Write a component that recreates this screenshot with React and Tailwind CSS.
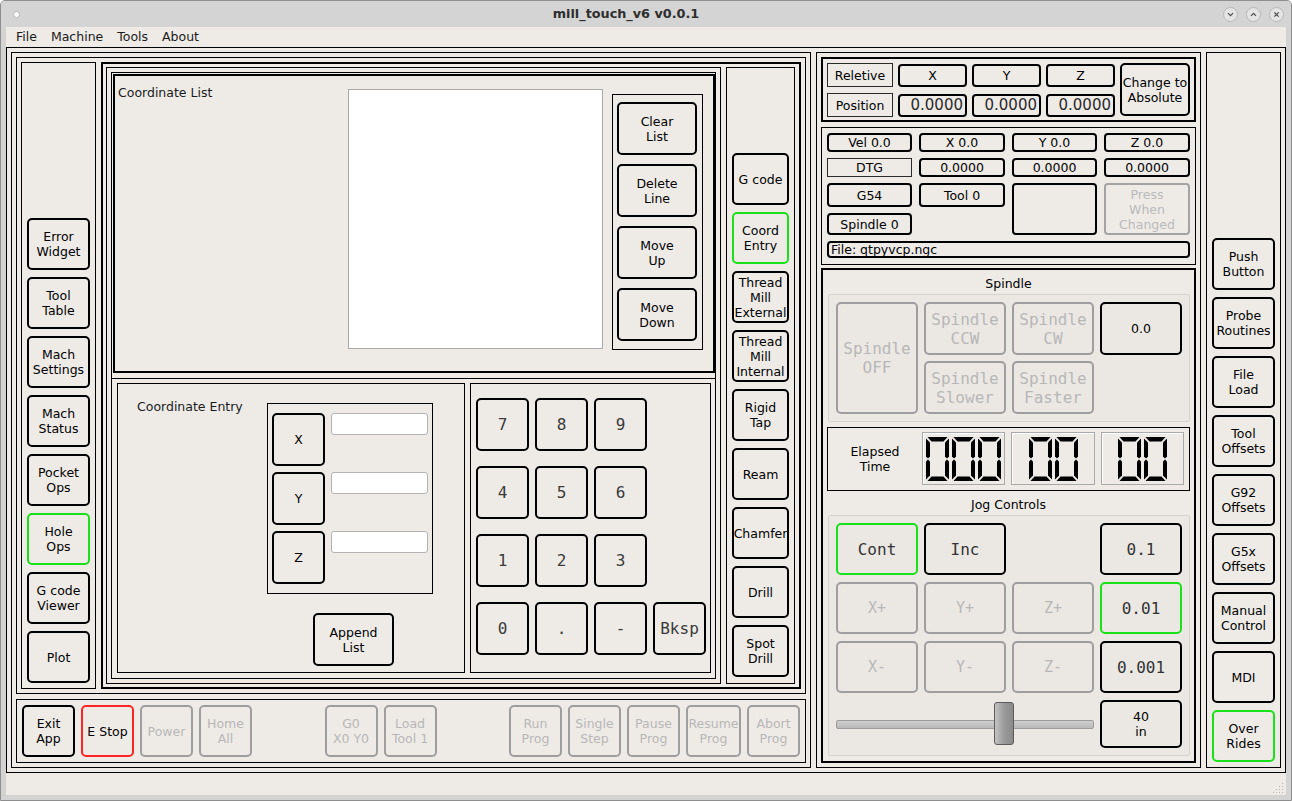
import React from "react";

const base =
  "flex items-center justify-center text-center whitespace-nowrap leading-[15px] border-2 rounded-[5px] shrink-0";

function Btn({ v = "n", className = "", children }) {
  const col =
    v === "g"
      ? "border-[#19e019]"
      : v === "r"
      ? "border-[#ff2424]"
      : v === "d"
      ? "border-[#9e9e9e] text-[#b7b7b7]"
      : "border-black";
  return <div className={`${base} ${col} ${className}`}>{children}</div>;
}

function L2({ a, b }) {
  return (
    <span>
      {a}
      <br />
      {b}
    </span>
  );
}

function Digit() {
  return (
    <svg width="23" height="44" viewBox="0 0 23 44">
      <g fill="#000">
        <polygon points="1.5,0 21.5,0 17.5,4.5 5.5,4.5" />
        <polygon points="1.5,44 21.5,44 17.5,39.5 5.5,39.5" />
        <polygon points="0,1.5 4,5.5 4,19.5 2,21.5 0,19.5" />
        <polygon points="0,24.5 2,22.5 4,24.5 4,38.5 0,42.5" />
        <polygon points="23,1.5 19,5.5 19,19.5 21,21.5 23,19.5" />
        <polygon points="23,24.5 21,22.5 19,24.5 19,38.5 23,42.5" />
      </g>
    </svg>
  );
}

function LCD({ n, w }) {
  return (
    <div
      className={`${w} h-[53px] flex items-center justify-center gap-[3px] border border-[#a9a9a9] shadow-[inset_1px_1px_0_#ffffff]`}
    >
      {Array.from({ length: n }).map((_, i) => (
        <Digit key={i} />
      ))}
    </div>
  );
}

function TitleBar() {
  return (
    <div className="h-[26px] flex items-center bg-[#d4d4d4] shrink-0">
      <div className="w-[35px] flex items-center pl-[12px]">
        <div className="w-[7px] h-[7px] rounded-full bg-white border border-[#b4b4b4]" />
      </div>
      <div className="flex-1 text-center font-bold text-[12.8px] text-[#2e2e2e]">
        mill_touch_v6 v0.0.1
      </div>
      <div className="w-[75px] flex justify-end gap-[8px] pr-[7px]">
        <div className="w-[15px] h-[15px] rounded-full bg-[#e4e4e4] border border-[#b8b8b8] flex items-center justify-center">
          <svg width="9" height="9" viewBox="0 0 9 9">
            <path d="M2 3.2 L4.5 5.7 L7 3.2" stroke="#4a4a4a" strokeWidth="1.2" fill="none" />
          </svg>
        </div>
        <div className="w-[15px] h-[15px] rounded-full bg-[#e4e4e4] border border-[#b8b8b8] flex items-center justify-center">
          <svg width="9" height="9" viewBox="0 0 9 9">
            <path d="M2 5.8 L4.5 3.3 L7 5.8" stroke="#4a4a4a" strokeWidth="1.2" fill="none" />
          </svg>
        </div>
        <div className="w-[15px] h-[15px] rounded-full bg-[#e4e4e4] border border-[#b8b8b8] flex items-center justify-center">
          <svg width="9" height="9" viewBox="0 0 9 9">
            <path d="M2.3 2.3 L6.7 6.7 M6.7 2.3 L2.3 6.7" stroke="#4a4a4a" strokeWidth="1.2" fill="none" />
          </svg>
        </div>
      </div>
    </div>
  );
}

function MenuBar() {
  return (
    <div className="h-[20px] flex items-center pl-[3px] shrink-0 text-[#1a1a1a]">
      {["File", "Machine", "Tools", "About"].map((m) => (
        <div key={m} className="px-[7px]">
          {m}
        </div>
      ))}
    </div>
  );
}

function LeftSidebar() {
  const items = [
    ["Error", "Widget"],
    ["Tool", "Table"],
    ["Mach", "Settings"],
    ["Mach", "Status"],
    ["Pocket", "Ops"],
    ["Hole", "Ops", "g"],
    ["G code", "Viewer"],
    ["Plot"],
  ];
  return (
    <div className="w-[75px] border border-black p-[5px] flex flex-col justify-end gap-[7px] shrink-0">
      {items.map((it, i) => (
        <Btn key={i} v={it[2] || "n"} className="w-full h-[52px]">
          {it.length > 1 ? <L2 a={it[0]} b={it[1]} /> : it[0]}
        </Btn>
      ))}
    </div>
  );
}

function TabSidebar() {
  const items = [
    [["G code"]],
    [["Coord", "Entry"], "g"],
    [["Thread", "Mill", "External"]],
    [["Thread", "Mill", "Internal"]],
    [["Rigid", "Tap"]],
    [["Ream"]],
    [["Chamfer"]],
    [["Drill"]],
    [["Spot", "Drill"]],
  ];
  return (
    <div className="w-[69px] border border-black px-[5px] pt-[5px] pb-[6px] flex flex-col justify-end gap-[7px] shrink-0">
      {items.map((it, i) => (
        <Btn key={i} v={it[1] || "n"} className="w-full h-[52px]">
          <span>
            {it[0].map((t, j) => (
              <React.Fragment key={j}>
                {j > 0 && <br />}
                {t}
              </React.Fragment>
            ))}
          </span>
        </Btn>
      ))}
    </div>
  );
}

function CoordList() {
  return (
    <div className="ml-[1px] mt-[1px] h-[299px] border-2 border-black flex items-start shrink-0">
      <div className="w-[233px] pl-[3px] pt-[9px] leading-[15px] text-[#1a1a1a]">Coordinate List</div>
      <div className="mt-[13px] w-[255px] h-[260px] bg-white border border-[#a8a8a8]" />
      <div className="ml-[9px] mt-[18px] w-[91px] h-[256px] border border-black pl-[4px] pt-[7px] flex flex-col gap-[9px]">
        <Btn className="w-[80px] h-[53px]">
          <L2 a="Clear" b="List" />
        </Btn>
        <Btn className="w-[80px] h-[53px]">
          <L2 a="Delete" b="Line" />
        </Btn>
        <Btn className="w-[80px] h-[53px]">
          <L2 a="Move" b="Up" />
        </Btn>
        <Btn className="w-[80px] h-[53px]">
          <L2 a="Move" b="Down" />
        </Btn>
      </div>
    </div>
  );
}

function CoordEntry() {
  return (
    <div className="w-[348px] border border-black flex shrink-0">
      <div className="w-[149px] pl-[19px] pt-[15px] leading-[15px] text-[#1a1a1a]">Coordinate Entry</div>
      <div className="pt-[19px] flex flex-col">
        <div className="w-[166px] h-[191px] border border-black pl-[4px] pt-[9px] flex flex-col gap-[6px]">
          {["X", "Y", "Z"].map((a) => (
            <div key={a} className="flex items-start gap-[6px]">
              <Btn className="w-[53px] h-[53px]">{a}</Btn>
              <div className="w-[97px] h-[22px] bg-white border border-[#b3b3b3] rounded-[3px]" />
            </div>
          ))}
        </div>
        <Btn className="mt-[19px] ml-[46px] w-[81px] h-[53px]">
          <L2 a="Append" b="List" />
        </Btn>
      </div>
    </div>
  );
}

function Keypad() {
  const keys = ["7", "8", "9", null, "4", "5", "6", null, "1", "2", "3", null, "0", ".", "-", "Bksp"];
  return (
    <div className="w-[241px] border border-black pl-[5px] pt-[14px] shrink-0">
      <div className="grid grid-cols-[53px_53px_53px_53px] auto-rows-[53px] gap-x-[6px] gap-y-[15px] font-['DejaVu_Sans_Mono',monospace] text-[16px] text-[#3a3a3a]">
        {keys.map((k, i) =>
          k === null ? (
            <div key={i} />
          ) : (
            <Btn key={i} className="w-[53px] h-[53px]">
              {k}
            </Btn>
          )
        )}
      </div>
    </div>
  );
}

function MainContent() {
  return (
    <div className="flex-1 border-2 border-black pt-[3px] pl-[3px] pr-[4px] pb-[3px] flex gap-[5px]">
      <div className="w-[615px] border border-black p-[4px] flex shrink-0">
        <div className="flex-1 border border-black flex flex-col">
          <CoordList />
          <div className="mt-[5px] border-t border-black flex-1 pl-[5px] pr-[4px] pt-[4px] pb-[5px] flex gap-[5px]">
            <CoordEntry />
            <Keypad />
          </div>
        </div>
      </div>
      <TabSidebar />
    </div>
  );
}

function BottomBar() {
  return (
    <div className="h-[64px] border border-black p-[5px] flex items-center gap-[6px] shrink-0">
      <Btn className="w-[53px] h-[52px]">
        <L2 a="Exit" b="App" />
      </Btn>
      <Btn v="r" className="w-[53px] h-[52px]">
        E Stop
      </Btn>
      <Btn v="d" className="w-[53px] h-[52px]">
        Power
      </Btn>
      <Btn v="d" className="w-[53px] h-[52px]">
        <L2 a="Home" b="All" />
      </Btn>
      <div className="flex-1" />
      <Btn v="d" className="w-[53px] h-[52px]">
        <L2 a="G0" b="X0 Y0" />
      </Btn>
      <Btn v="d" className="w-[53px] h-[52px]">
        <L2 a="Load" b="Tool 1" />
      </Btn>
      <div className="flex-1" />
      <Btn v="d" className="w-[53px] h-[52px]">
        <L2 a="Run" b="Prog" />
      </Btn>
      <Btn v="d" className="w-[53px] h-[52px]">
        <L2 a="Single" b="Step" />
      </Btn>
      <Btn v="d" className="w-[53px] h-[52px]">
        <L2 a="Pause" b="Prog" />
      </Btn>
      <Btn v="d" className="w-[55px] h-[52px]">
        <L2 a="Resume" b="Prog" />
      </Btn>
      <Btn v="d" className="w-[53px] h-[52px]">
        <L2 a="Abort" b="Prog" />
      </Btn>
    </div>
  );
}

function LeftPanel() {
  return (
    <div className="w-[800px] border border-black p-[4px] flex flex-col gap-[5px] shrink-0">
      <div className="h-[637px] border border-black p-[4px] flex gap-[5px] shrink-0">
        <LeftSidebar />
        <MainContent />
      </div>
      <BottomBar />
    </div>
  );
}

const rbox = "flex items-center justify-center border-2 border-black rounded-[4px] leading-[15px] whitespace-nowrap";
const sbox = "flex items-center justify-center border border-[#2a2a2a] leading-[15px]";

function DRO() {
  return (
    <div className="h-[65px] border-2 border-black pl-[4px] pt-[4px] flex items-start gap-[5px] shrink-0">
      <div className="w-[66px] flex flex-col gap-[6px]">
        <div className={`${sbox} h-[24px]`}>Reletive</div>
        <div className={`${sbox} h-[24px]`}>Position</div>
      </div>
      {["X", "Y", "Z"].map((a) => (
        <div key={a} className="w-[69px] mt-[1px] flex flex-col gap-[7px]">
          <div className={`${rbox} h-[23px]`}>{a}</div>
          <div className="h-[23px] border-2 border-black rounded-[4px] flex items-center justify-end pr-[2px] text-[15px] text-[#2a2a2a] overflow-visible whitespace-nowrap">
            0.0000
          </div>
        </div>
      ))}
      <Btn className="w-[70px] h-[53px]">
        <L2 a="Change to" b="Absolute" />
      </Btn>
    </div>
  );
}

function StatusPanel() {
  return (
    <div className="mt-[5px] h-[138px] border border-black p-[5px] shrink-0">
      <div className="grid grid-cols-[85px_86px_85px_86px] grid-rows-[19px_19px_24px_22px_17px] gap-x-[7px] gap-y-[6px]">
        <div className={`${rbox} col-start-1 row-start-1`}>Vel 0.0</div>
        <div className={`${rbox} col-start-2 row-start-1`}>X 0.0</div>
        <div className={`${rbox} col-start-3 row-start-1`}>Y 0.0</div>
        <div className={`${rbox} col-start-4 row-start-1`}>Z 0.0</div>
        <div className={`${sbox} col-start-1 row-start-2`}>DTG</div>
        <div className={`${rbox} col-start-2 row-start-2`}>0.0000</div>
        <div className={`${rbox} col-start-3 row-start-2`}>0.0000</div>
        <div className={`${rbox} col-start-4 row-start-2`}>0.0000</div>
        <div className={`${rbox} col-start-1 row-start-3`}>G54</div>
        <div className={`${rbox} col-start-2 row-start-3`}>Tool 0</div>
        <div className={`${rbox} col-start-3 row-start-3 row-span-2`} />
        <div className="col-start-4 row-start-3 row-span-2 flex items-center justify-center text-center border-2 border-[#a3a3a3] rounded-[4px] text-[#bababa] leading-[15px]">
          <span>
            Press
            <br />
            When
            <br />
            Changed
          </span>
        </div>
        <div className={`${rbox} col-start-1 row-start-4`}>Spindle 0</div>
        <div className="col-start-1 col-span-4 row-start-5 border-2 border-black rounded-[4px] flex items-center pl-[2px] leading-[15px]">
          File: qtpyvcp.ngc
        </div>
      </div>
    </div>
  );
}

const mono = "font-['DejaVu_Sans_Mono',monospace]";

function SpindleJog() {
  return (
    <div className="mt-[3px] flex-1 border-2 border-black flex flex-col">
      <div className="h-[24px] pt-[6px] leading-[15px] text-center shrink-0">Spindle</div>
      <div className="ml-[5px] mr-[4px] h-[128px] border border-[#d6d3ce] bg-[#ebe8e4] rounded-[2px] p-[7px] shrink-0">
        <div className={`grid grid-cols-[82px_82px_82px_82px] grid-rows-[53px_53px] gap-[6px] text-[16px] ${mono}`}>
          <Btn v="d" className="col-start-1 row-start-1 row-span-2 !leading-[19px]">
            <L2 a="Spindle" b="OFF" />
          </Btn>
          <Btn v="d" className="col-start-2 row-start-1 !leading-[19px]">
            <L2 a="Spindle" b="CCW" />
          </Btn>
          <Btn v="d" className="col-start-3 row-start-1 !leading-[19px]">
            <L2 a="Spindle" b="CW" />
          </Btn>
          <Btn className="col-start-4 row-start-1 font-['DejaVu_Sans',sans-serif] text-[12.5px]">0.0</Btn>
          <Btn v="d" className="col-start-2 row-start-2 !leading-[19px]">
            <L2 a="Spindle" b="Slower" />
          </Btn>
          <Btn v="d" className="col-start-3 row-start-2 !leading-[19px]">
            <L2 a="Spindle" b="Faster" />
          </Btn>
        </div>
      </div>
      <div className="mt-[5px] mx-[4px] h-[64px] border border-black pt-[4px] flex items-start shrink-0">
        <div className="w-[94px] h-[53px] flex items-center justify-center text-center leading-[15px]">
          <L2 a="Elapsed" b="Time" />
        </div>
        <LCD n={3} w="w-[83px]" />
        <div className="w-[6px]" />
        <LCD n={2} w="w-[84px]" />
        <div className="w-[6px]" />
        <LCD n={2} w="w-[83px]" />
      </div>
      <div className="h-[24px] pt-[6px] leading-[15px] text-center shrink-0">Jog Controls</div>
      <div className="ml-[5px] mr-[4px] h-[241px] border border-[#d6d3ce] bg-[#ebe8e4] rounded-[2px] p-[7px] shrink-0">
        <div className={`grid grid-cols-[82px_82px_82px_82px] grid-rows-[52px_52px_52px_48px] gap-x-[6px] gap-y-[7px] text-[16px] text-[#333333] ${mono}`}>
          <Btn v="g" className="col-start-1 row-start-1">Cont</Btn>
          <Btn className="col-start-2 row-start-1">Inc</Btn>
          <Btn className="col-start-4 row-start-1">0.1</Btn>
          <Btn v="d" className="col-start-1 row-start-2 text-[15px]">X+</Btn>
          <Btn v="d" className="col-start-2 row-start-2 text-[15px]">Y+</Btn>
          <Btn v="d" className="col-start-3 row-start-2 text-[15px]">Z+</Btn>
          <Btn v="g" className="col-start-4 row-start-2">0.01</Btn>
          <Btn v="d" className="col-start-1 row-start-3 text-[15px]">X-</Btn>
          <Btn v="d" className="col-start-2 row-start-3 text-[15px]">Y-</Btn>
          <Btn v="d" className="col-start-3 row-start-3 text-[15px]">Z-</Btn>
          <Btn className="col-start-4 row-start-3">0.001</Btn>
          <div className="col-start-1 col-span-3 row-start-4 relative flex items-center">
            <div className="w-full h-[9px] border border-[#9c9c9c] rounded-[2px] bg-gradient-to-b from-[#cfcfcf] to-[#b9b9b9]" />
            <div className="absolute left-[158px] top-[2px] w-[20px] h-[43px] border border-[#5c5c5c] rounded-[3px] bg-gradient-to-r from-[#c4c4c4] via-[#9a9a9a] to-[#8a8a8a]" />
          </div>
          <Btn className="col-start-4 row-start-4 font-['DejaVu_Sans',sans-serif] text-[12.5px] text-black">
            <L2 a="40" b="in" />
          </Btn>
        </div>
      </div>
    </div>
  );
}

function MiddlePanel() {
  return (
    <div className="w-[385px] border border-black p-[4px] flex flex-col shrink-0">
      <DRO />
      <StatusPanel />
      <SpindleJog />
    </div>
  );
}

function RightSidebar() {
  const items = [
    ["Push", "Button"],
    ["Probe", "Routines"],
    ["File", "Load"],
    ["Tool", "Offsets"],
    ["G92", "Offsets"],
    ["G5x", "Offsets"],
    ["Manual", "Control"],
    ["MDI"],
    ["Over", "Rides", "g"],
  ];
  return (
    <div className="w-[75px] border border-black p-[5px] flex flex-col justify-end gap-[7px] shrink-0">
      {items.map((it, i) => (
        <Btn key={i} v={it[2] || "n"} className="w-full h-[52px]">
          {it.length > 1 ? <L2 a={it[0]} b={it[1]} /> : it[0]}
        </Btn>
      ))}
    </div>
  );
}

export default function App() {
  return (
    <div className="w-[1292px] h-[801px] bg-[#d3d3d3] border border-[#8e8e8e] rounded-t-[5px] flex flex-col overflow-hidden font-['DejaVu_Sans',sans-serif] text-[12.5px] text-black">
      <TitleBar />
      <div className="flex-1 mx-[5px] mb-[5px] bg-[#eeebe7] flex flex-col">
        <MenuBar />
        <div className="h-[726px] border border-black p-[4px] flex gap-[5px] shrink-0">
          <LeftPanel />
          <MiddlePanel />
          <RightSidebar />
        </div>
        <div className="flex-1 flex justify-end items-end pr-[2px] pb-[2px]">
          <svg width="11" height="11" viewBox="0 0 11 11">
            <g fill="#b5b5b5">
              <rect x="9" y="1" width="1" height="1" />
              <rect x="6" y="4" width="1" height="1" />
              <rect x="9" y="4" width="1" height="1" />
              <rect x="3" y="7" width="1" height="1" />
              <rect x="6" y="7" width="1" height="1" />
              <rect x="9" y="7" width="1" height="1" />
              <rect x="0" y="10" width="1" height="1" />
              <rect x="3" y="10" width="1" height="1" />
              <rect x="6" y="10" width="1" height="1" />
              <rect x="9" y="10" width="1" height="1" />
            </g>
          </svg>
        </div>
      </div>
    </div>
  );
}
